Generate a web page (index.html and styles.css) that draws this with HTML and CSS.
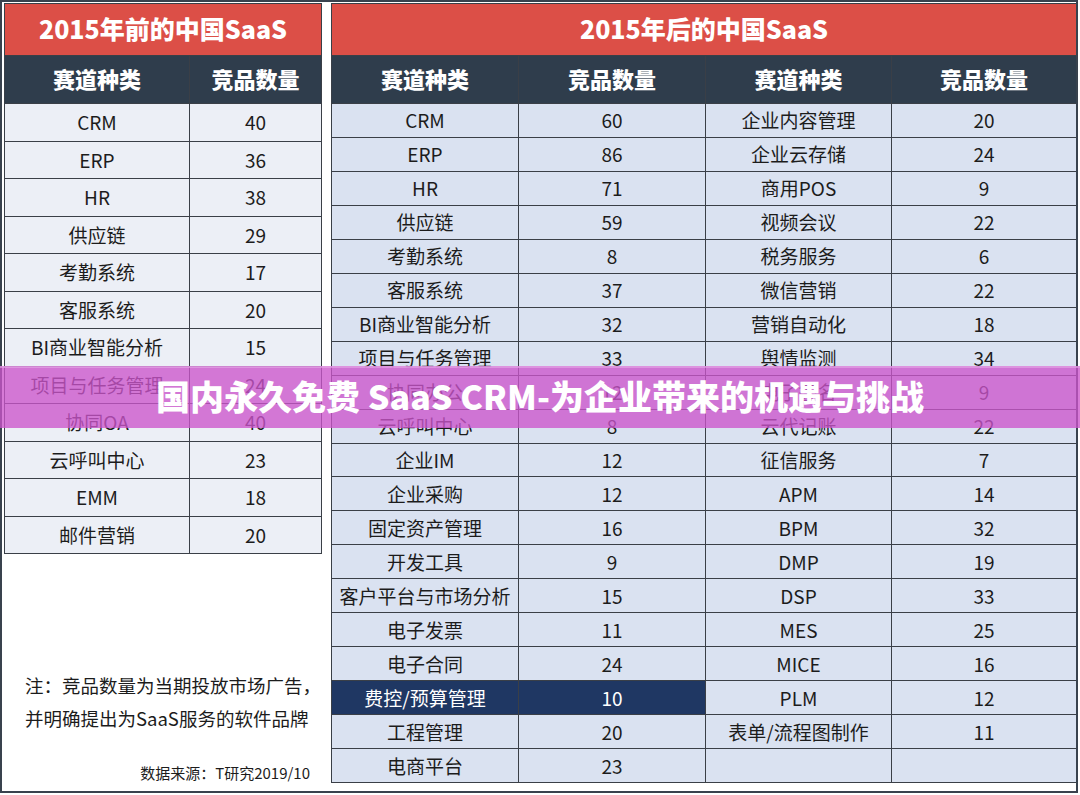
FILE: index.html
```html
<!DOCTYPE html>
<html lang="zh-CN">
<head>
<meta charset="utf-8">
<title>国内永久免费 SaaS CRM-为企业带来的机遇与挑战</title>
<link rel="stylesheet" href="styles.css">
</head>
<body>
<div class="frame">
  <div class="left-panel">
    <div class="grid grid-left">
      <div class="title span-2">2015年前的中国SaaS</div>
      <div class="head">赛道种类</div><div class="head">竞品数量</div>
      <div class="cell">CRM</div><div class="cell">40</div>
      <div class="cell">ERP</div><div class="cell">36</div>
      <div class="cell">HR</div><div class="cell">38</div>
      <div class="cell">供应链</div><div class="cell">29</div>
      <div class="cell">考勤系统</div><div class="cell">17</div>
      <div class="cell">客服系统</div><div class="cell">20</div>
      <div class="cell">BI商业智能分析</div><div class="cell">15</div>
      <div class="cell">项目与任务管理</div><div class="cell">24</div>
      <div class="cell">协同OA</div><div class="cell">40</div>
      <div class="cell">云呼叫中心</div><div class="cell">23</div>
      <div class="cell">EMM</div><div class="cell">18</div>
      <div class="cell">邮件营销</div><div class="cell">20</div>
    </div>
    <div class="notes">
      <p class="note">注：竞品数量为当期投放市场广告，</p>
      <p class="note">并明确提出为SaaS服务的软件品牌</p>
      <p class="source">数据来源：T研究2019/10</p>
    </div>
  </div>
  <div class="grid grid-right">
    <div class="title span-4">2015年后的中国SaaS</div>
    <div class="head">赛道种类</div><div class="head">竞品数量</div><div class="head">赛道种类</div><div class="head">竞品数量</div>
    <div class="cell">CRM</div><div class="cell">60</div><div class="cell">企业内容管理</div><div class="cell">20</div>
    <div class="cell">ERP</div><div class="cell">86</div><div class="cell">企业云存储</div><div class="cell">24</div>
    <div class="cell">HR</div><div class="cell">71</div><div class="cell">商用POS</div><div class="cell">9</div>
    <div class="cell">供应链</div><div class="cell">59</div><div class="cell">视频会议</div><div class="cell">22</div>
    <div class="cell">考勤系统</div><div class="cell">8</div><div class="cell">税务服务</div><div class="cell">6</div>
    <div class="cell">客服系统</div><div class="cell">37</div><div class="cell">微信营销</div><div class="cell">22</div>
    <div class="cell">BI商业智能分析</div><div class="cell">32</div><div class="cell">营销自动化</div><div class="cell">18</div>
    <div class="cell">项目与任务管理</div><div class="cell">33</div><div class="cell">舆情监测</div><div class="cell">34</div>
    <div class="cell">协同办公</div><div class="cell">12</div><div class="cell">电子签名</div><div class="cell">9</div>
    <div class="cell">云呼叫中心</div><div class="cell">8</div><div class="cell">云代记账</div><div class="cell">22</div>
    <div class="cell">企业IM</div><div class="cell">12</div><div class="cell">征信服务</div><div class="cell">7</div>
    <div class="cell">企业采购</div><div class="cell">12</div><div class="cell">APM</div><div class="cell">14</div>
    <div class="cell">固定资产管理</div><div class="cell">16</div><div class="cell">BPM</div><div class="cell">32</div>
    <div class="cell">开发工具</div><div class="cell">9</div><div class="cell">DMP</div><div class="cell">19</div>
    <div class="cell">客户平台与市场分析</div><div class="cell">15</div><div class="cell">DSP</div><div class="cell">33</div>
    <div class="cell">电子发票</div><div class="cell">11</div><div class="cell">MES</div><div class="cell">25</div>
    <div class="cell">电子合同</div><div class="cell">24</div><div class="cell">MICE</div><div class="cell">16</div>
    <div class="cell hl">费控/预算管理</div><div class="cell hl">10</div><div class="cell">PLM</div><div class="cell">12</div>
    <div class="cell">工程管理</div><div class="cell">20</div><div class="cell">表单/流程图制作</div><div class="cell">11</div>
    <div class="cell">电商平台</div><div class="cell">23</div><div class="cell"></div><div class="cell"></div>
  </div>
</div>
<div class="banner">国内永久免费 SaaS CRM-为企业带来的机遇与挑战</div>
</body>
</html>
```
FILE: styles.css
```css
html, body {
  margin: 0;
  padding: 0;
  background: #ffffff;
}
body {
  width: 1080px;
  height: 795px;
  position: relative;
  overflow: hidden;
  font-family: "Noto Sans CJK SC", "Noto Sans", sans-serif;
  color: #1c1c1c;
}
.frame {
  box-sizing: border-box;
  width: 1078px;
  height: 793px;
  border: 2px solid #39424e;
  display: flex;
  align-items: flex-start;
  gap: 9px;
  padding: 1px 0 0 0;
  background: #ffffff;
}
.left-panel {
  box-sizing: border-box;
  width: 320px;
  height: 788px;
  padding-left: 2px;
  display: flex;
  flex-direction: column;
}
.grid {
  box-sizing: border-box;
  display: grid;
  gap: 1px;
  background: #3a3f47;
  border: 1px solid #3a3f47;
}
.grid-left {
  width: 318px;
  height: 551px;
  grid-template-columns: 184px 131px;
  grid-template-rows: 51px 47px repeat(12, 1fr);
}
.grid-right {
  width: 745px;
  height: 780px;
  grid-template-columns: 186px 186px 185px 184px;
  grid-template-rows: 51px 47px repeat(20, 1fr);
}
.title {
  background: #dc4f47;
  color: #ffffff;
  font-weight: 900;
  font-size: 25px;
  display: flex;
  align-items: center;
  justify-content: center;
  padding-bottom: 3px;
}
.span-2 { grid-column: span 2; }
.span-4 { grid-column: span 4; }
.head {
  background: #2f3d4c;
  color: #ffffff;
  font-weight: 900;
  font-size: 22px;
  display: flex;
  align-items: center;
  justify-content: center;
  padding-bottom: 3px;
}
.cell {
  display: flex;
  align-items: center;
  justify-content: center;
  font-size: 19px;
  white-space: nowrap;
  padding-bottom: 1px;
}
.grid-left .cell { background: #eceff6; }
.grid-right .cell { background: #dae2f1; }
.grid-right .cell.hl {
  background: #1f3763;
  color: #ffffff;
}
.notes {
  margin-top: auto;
  padding: 0 0 8px 21px;
}
.note {
  margin: 0;
  font-size: 18.5px;
  line-height: 33px;
}
.source {
  margin: 27px 0 0 0;
  font-size: 15px;
  text-align: right;
  padding-right: 12px;
}
.banner {
  position: absolute;
  left: 0;
  top: 366px;
  width: 1080px;
  height: 62px;
  background: rgba(204, 85, 204, 0.78);
  border-top: 2px solid rgba(230, 170, 230, 0.6);
  box-sizing: border-box;
  color: #ffffff;
  font-weight: 900;
  font-size: 34px;
  display: flex;
  align-items: center;
  justify-content: center;
  white-space: nowrap;
  padding-bottom: 6px;
}
```
